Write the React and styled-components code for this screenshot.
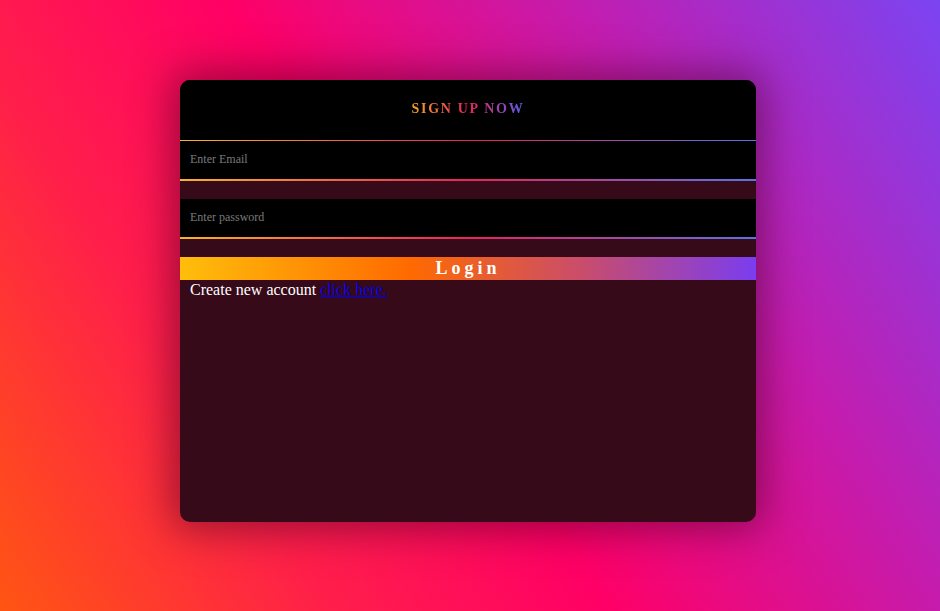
import React from "react";
import styled, { createGlobalStyle } from "styled-components";

const GlobalStyle = createGlobalStyle`
  body {
    margin: 0;
    font-family: "Liberation Serif", "Times New Roman", serif;
  }
`;

const lineGradient = "linear-gradient(90deg, #f7b42c 0%, #e8245c 50%, #5a72e6 100%)";

export default function App() {
  return (
    <>
      <GlobalStyle />
      <Page>
        <Card>
          <Header>
            <Title>SIGN UP NOW</Title>
          </Header>
          <Field type="email" placeholder="Enter Email" />
          <Field type="password" placeholder="Enter password" $gap />
          <LoginButton type="button">Login</LoginButton>
          <Footer>
            Create new account <a href="#signup">click here.</a>
          </Footer>
        </Card>
      </Page>
    </>
  );
}

const Page = styled.div`
  height: 611px;
  box-sizing: border-box;
  padding: 80px 4px 0 0;
  display: flex;
  justify-content: center;
  align-items: flex-start;
  background: linear-gradient(58deg, #ff5513 0%, #ff1f4a 25%, #ff0066 46%, #c41cae 72%, #7b44f2 100%);
`;

const Card = styled.div`
  width: 576px;
  height: 442px;
  background-color: #360a19;
  border-radius: 10px;
  overflow: hidden;
  box-shadow: 0 0 40px 8px rgba(60, 0, 30, 0.5);
  display: flex;
  flex-direction: column;
`;

const Header = styled.div`
  height: 60px;
  background-color: #000;
  display: flex;
  align-items: center;
  justify-content: center;
  border-bottom: 1px solid transparent;
  border-image: ${lineGradient} 1;
`;

const Title = styled.h2`
  margin: 0;
  padding-bottom: 3px;
  font-size: 14px;
  font-weight: bold;
  letter-spacing: 1.7px;
  background: linear-gradient(90deg, #f5a623 0%, #e8245c 50%, #5a5ee8 100%);
  -webkit-background-clip: text;
  background-clip: text;
  color: transparent;
`;

const Field = styled.input`
  display: block;
  height: 40px;
  box-sizing: border-box;
  margin-top: ${(p) => (p.$gap ? "18px" : "0")};
  padding: 0 10px 2px;
  border: none;
  border-bottom: 2px solid transparent;
  border-image: ${lineGradient} 1;
  background-color: #000;
  color: #fff;
  font-family: "Liberation Serif", "Times New Roman", serif;
  font-size: 12px;
  outline: none;

  &::placeholder {
    color: #7a7a7a;
  }
`;

const LoginButton = styled.button`
  margin-top: 18px;
  height: 23px;
  padding: 0;
  border: none;
  background: linear-gradient(90deg, #ffbe0b 0%, #ff6a00 40%, #c94c6c 70%, #7a3df0 100%);
  color: #fff;
  font-family: "Liberation Serif", "Times New Roman", serif;
  font-size: 18px;
  font-weight: bold;
  letter-spacing: 4px;
  line-height: 23px;
  cursor: pointer;
`;

const Footer = styled.p`
  margin: 0;
  padding: 0 10px;
  color: #fff;
  font-size: 16px;
  line-height: 20px;

  a {
    color: #0000ee;
  }
`;
